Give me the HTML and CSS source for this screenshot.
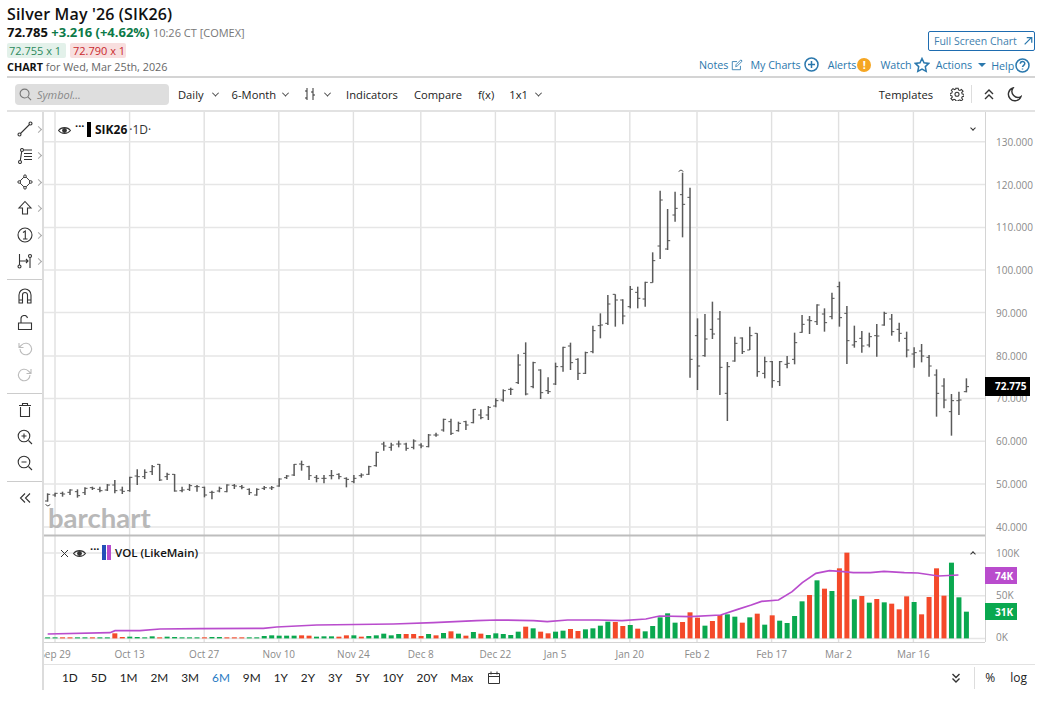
FILE: index.html
```html
<!DOCTYPE html>
<html lang="en">
<head>
<meta charset="utf-8">
<title>Silver May '26 (SIK26)</title>
<link rel="stylesheet" href="styles.css">
</head>
<body>
<div class="page">
  <header class="head">
    <div class="quote">
      <h1 class="title">Silver May '26 (SIK26)</h1>
      <div class="price"><b>72.785</b> <b class="up">+3.216 (+4.62%)</b> <span class="time">10:26 CT [COMEX]</span></div>
      <div class="bidask"><span class="bid">72.755 x 1</span><span class="ask">72.790 x 1</span></div>
      <div class="asof"><b>CHART</b> for Wed, Mar 25th, 2026</div>
    </div>
    <div class="links">
      <a class="full">Full Screen Chart
        <svg class="ic" width="10" height="10" viewBox="0 0 12 12"><path d="M2 10 10 2M4.500 2H10.500V8" class="blue thick"/></svg>
      </a>
      <nav class="actions">
        <a class="l1">Notes <svg width="12" height="12" viewBox="0 0 14 14"><path d="M11 8v4.500H1.500V3H7M5.500 9l.5-2.500L11.500 1 13 2.500 7.500 8z" class="blue"/></svg></a>
        <a class="l2">My Charts <svg width="15" height="15" viewBox="0 0 15 15"><circle cx="7.500" cy="7.500" r="6.500" class="blue thick"/><path d="M7.500 4v7M4 7.500h7" class="blue thick"/></svg></a>
        <a class="l3">Alerts<span class="alert">!</span></a>
        <a class="l4">Watch<svg width="16" height="16" viewBox="0 0 16 16"><path d="M8 1.500l2 4.300 4.700.6-3.400 3.200.9 4.700L8 12l-4.200 2.300.9-4.700L1.300 6.400 6 5.800z" class="blue thick"/></svg></a>
        <a class="l5">Actions <span class="caret"></span></a>
        <a class="l6">Help<svg width="15" height="15" viewBox="0 0 15 15"><circle cx="7.500" cy="7.500" r="6.500" class="blue thick"/><path d="M5.300 5.800c0-3 4.500-3 4.500-.2 0 1.700-2.300 1.700-2.300 3.500M7.500 10.400v1.200" class="blue thick"/></svg></a>
      </nav>
    </div>
  </header>

  <div class="toolbar">
    <label class="search">
      <svg width="13" height="13" viewBox="0 0 14 14"><circle cx="6" cy="6" r="4.800" class="grey"/><path d="M9.500 9.500 13 13" class="grey"/></svg>
      <span>Symbol...</span>
    </label>
    <span class="tool t-daily">Daily<i class="chev"></i></span>
    <span class="tool t-range">6-Month<i class="chev"></i></span>
    <span class="tool t-bars"><svg width="12" height="14" viewBox="0 0 12 14"><path d="M3 1v12M1 4h2M3 11H1M9 1v12M7 5h2M9 8h2" class="ink"/></svg><i class="chev"></i></span>
    <span class="tool t-ind">Indicators</span>
    <span class="tool t-cmp">Compare</span>
    <span class="tool t-fx">f(x)</span>
    <span class="tool t-one">1x1<i class="chev"></i></span>
    <span class="spring"></span>
    <span class="tool t-tpl">Templates</span>
    <svg class="t-gear" width="14" height="14" viewBox="0 0 24 24"><path d="M10 2h4l.6 3 2.400 1 2.600-1.700 2.800 2.800L20 9.700l1 2.300 3 .5v3.500l-3 .5-1 2.400 1.700 2.600-2.800 2.800L17 22l-2.400 1-.6 1h-4l-.6-2-2.400-1-2.600 1.700-2.800-2.800L4 17.300 3 15l-3-.5V11l3-.5L4 8 2.300 5.500l2.800-2.800L7.700 4.400 10 3.400z" class="ink wide"/><circle cx="12" cy="12.500" r="3.500" class="ink wide"/></svg>
    <span class="vsep"></span>
    <svg class="t-up" width="12" height="12" viewBox="0 0 12 12"><path d="M2 6l4-4 4 4M2 11l4-4 4 4" class="ink thick"/></svg>
    <svg class="t-moon" width="15" height="15" viewBox="0 0 15 15"><path d="M6 1a6.500 6.500 0 1 0 8 8.500A6 6 0 0 1 6 1z" class="ink thick"/></svg>
  </div>

  <div class="work">
    <aside class="side">
      <button class="sb more"><svg viewBox="0 0 16 16"><circle cx="2.500" cy="13.500" r="1.500"/><circle cx="13.500" cy="2.500" r="1.500"/><path d="M3.500 12.500l9-9"/></svg></button>
      <button class="sb more"><svg viewBox="0 0 16 16"><circle cx="3" cy="14" r="1.500"/><circle cx="5" cy="2" r="1.500"/><path d="M3.300 12.500 4.700 3.500M6.500 2H15M7 5.500h8M7 8.500h8M7 11.500h8"/></svg></button>
      <button class="sb more"><svg viewBox="0 0 18 18"><circle cx="9" cy="2.500" r="1.500"/><circle cx="9" cy="15.500" r="1.500"/><circle cx="2.500" cy="9" r="1.500"/><circle cx="15.500" cy="9" r="1.500"/><path d="M7.800 3.500 3.500 7.800M10.200 3.500l4.300 4.300M3.500 10.200l4.300 4.300M14.500 10.200l-4.300 4.300"/></svg></button>
      <button class="sb more"><svg viewBox="0 0 16 16"><path d="M8 1.500 14 8h-3.500v6h-5V8H2z"/></svg></button>
      <button class="sb more"><svg viewBox="0 0 16 16"><circle cx="8" cy="8" r="7"/><path d="M6 5.500 8.300 4v8M6 12h4.500"/></svg></button>
      <button class="sb more"><svg viewBox="0 0 16 16"><circle cx="2.500" cy="13.500" r="1.500"/><circle cx="13" cy="3" r="1.500"/><path d="M2.500 1v11M13 4.500V15M3 8h8M9 6l2 2-2 2"/></svg></button>
      <hr class="sbsep">
      <button class="sb"><svg viewBox="0 0 16 16"><path d="M2 15V7a6 6 0 0 1 12 0v8h-3.500V7a2.500 2.500 0 0 0-5 0v8zM2 12h3.500M10.500 12H14"/></svg></button>
      <button class="sb"><svg viewBox="0 0 16 16"><path d="M1.500 8h13v6.500h-13zM4 8V4a3.300 3.300 0 0 1 6.500-1"/></svg></button>
      <button class="sb off"><svg viewBox="0 0 16 16"><path d="M3 8a5.800 5.800 0 1 0 1.800-4.200L2 6.500M2 2v4.500h4.500"/></svg></button>
      <button class="sb off"><svg viewBox="0 0 16 16"><path d="M13 8a5.800 5.800 0 1 1-1.800-4.200L14 6.500M14 2v4.500H9.500"/></svg></button>
      <hr class="sbsep">
      <button class="sb"><svg viewBox="0 0 16 16"><path d="M3.500 5v9.500h9V5M2 3.500h12M5.500 3.500V1.500h5v2"/></svg></button>
      <button class="sb"><svg viewBox="0 0 16 16"><circle cx="7" cy="7" r="5.800"/><path d="M11.500 11.500 15 15M7 4.500v5M4.500 7h5"/></svg></button>
      <button class="sb"><svg viewBox="0 0 16 16"><circle cx="7" cy="7" r="5.800"/><path d="M11.500 11.500 15 15M4.500 7h5"/></svg></button>
      <hr class="sbsep">
      <button class="sb"><svg viewBox="0 0 16 16"><path d="M8 3.500 3.500 8 8 12.500M13 3.500 8.500 8l4.500 4.500"/></svg></button>
    </aside>

    <section class="chartcol">
      <div class="canvas">
        <svg id="chart" class="chart" width="991" height="553" viewBox="44 112 991 553" role="img" aria-label="Silver May 2026 price and volume chart"></svg>
        <div class="legend lg-main">
          <svg class="eye" width="13" height="9" viewBox="0 0 12 8"><path d="M.5 4C3 .5 9 .5 11.500 4 9 7.500 3 7.500.5 4z" class="ink"/><circle cx="6" cy="4" r="2.200" class="dot"/></svg>
          <span class="dots">···</span><i class="swatch black"></i><b>SIK26</b><span class="lg-tf">·1D·</span>
        </div>
        <div class="legend lg-vol">
          <svg width="9" height="9" viewBox="0 0 9 9"><path d="M1 1l7 7M8 1 1 8" class="ink"/></svg>
          <svg class="eye" width="13" height="9" viewBox="0 0 12 8"><path d="M.5 4C3 .5 9 .5 11.500 4 9 7.500 3 7.500.5 4z" class="ink"/><circle cx="6" cy="4" r="2.200" class="dot"/></svg>
          <span class="dots">···</span><i class="swatch blue-s"></i><i class="swatch purple-s"></i><b>VOL (LikeMain)</b>
        </div>
        <span class="fold fold-main"></span>
        <span class="fold fold-vol"></span>
      </div>
      <div class="ranges">
        <span>1D</span><span>5D</span><span>1M</span><span>2M</span><span>3M</span><span class="on">6M</span><span>9M</span><span>1Y</span><span>2Y</span><span>3Y</span><span>5Y</span><span>10Y</span><span>20Y</span><span>Max</span>
        <svg class="cal" width="12" height="13" viewBox="0 0 12 13"><path d="M.5 2.500h11v10H.500zM.5 5.500h11M3 .5v3M9 .5v3" class="ink"/></svg>
        <span class="spring"></span>
        <svg class="dn" width="10" height="10" viewBox="0 0 10 10"><path d="M1.500 1 5 4.500 8.500 1M1.500 5.500 5 9l3.500-3.500" class="ink thick"/></svg>
        <span class="vsep2"></span>
        <span class="pct">%</span><span class="log">log</span>
      </div>
    </section>
  </div>
</div>
<script src="chart.js"></script>
</body>
</html>
```
FILE: styles.css
```css
* { box-sizing: border-box; }
html, body { margin: 0; padding: 0; background: #fff; }
body { font-family: "Open Sans", "Noto Sans", sans-serif; color: #222; overflow: hidden; }
.page { width: 1035px; height: 711px; padding-left: 7px; }
svg { display: block; fill: none; }
a { color: #2b78ad; }

.blue { stroke: #2b78ad; stroke-width: 1; fill: none; }
.blue.thick { stroke-width: 1.500; }
.ink { stroke: #333; stroke-width: 1; fill: none; }
.ink.thick { stroke-width: 1.400; }
.ink.wide { stroke-width: 1.800; }
.grey { stroke: #777; stroke-width: 1.200; fill: none; }

.head { height: 78px; border-bottom: 2px solid #d4d4d4; display: flex; justify-content: space-between; }
.quote { padding-top: 4px; }
.title { margin: 0; font-size: 16px; line-height: 20px; font-weight: 600; color: #111; letter-spacing: .15px; }
.price { font-size: 13px; line-height: 17px; white-space: nowrap; color: #111; }
.price b { font-weight: 700; }
.price .up { color: #0c7a48; }
.price .time { font-size: 11px; color: #777; }
.bidask { display: flex; gap: 4px; margin-top: 2px; font-size: 11px; line-height: 15px; white-space: nowrap; }
.bid { background: #e3f1ea; color: #2b8a5c; padding-left: 2px; border-radius: 2px; width: 59px; }
.ask { background: #f8dfdf; color: #c9282d; padding-left: 3px; border-radius: 2px; width: 56px; }
.asof { font-size: 10.800px; line-height: 16px; margin-top: 1px; color: #666; white-space: nowrap; }
.asof b { color: #111; font-weight: 700; }

.links { display: flex; flex-direction: column; align-items: flex-end; padding-top: 31px; }
.full { display: flex; align-items: center; gap: 6px; width: 107px; height: 21px; border: 1px solid #1e6cb0; border-radius: 2px; padding-left: 5px; font-size: 10.500px; color: #3f7fae; white-space: nowrap; }
.actions { display: flex; align-items: center; height: 24px; font-size: 10.700px; margin-top: 2px; width: 336px; white-space: nowrap; }
.actions a { display: flex; align-items: center; gap: 3px; }
.l2 { margin-left: 7px; }
.l3 { margin-left: 9px; padding-top: 1px; }
.actions .l3 { gap: 1px; }
.l4 { margin-left: 9px; padding-top: 1px; }
.actions .l4 { gap: 2px; }
.l5 { margin-left: 6px; padding-top: 1px; }
.l6 { margin-left: 5px; padding-top: 2px; }
.actions .l6 { gap: 1px; }
.alert { display: block; width: 14px; height: 14px; border-radius: 50%; background: #f5a623; color: #fff; font-weight: 700; font-size: 11px; line-height: 14px; text-align: center; }
.caret { width: 0; height: 0; border: 4px solid transparent; border-top: 4px solid #2b78ad; border-bottom: 0; margin-left: 3px; }

.toolbar { height: 34px; border-bottom: 2px solid #e2e2e2; display: flex; align-items: center; font-size: 11.200px; color: #222; padding-left: 8px; }
.search { width: 154px; height: 21px; border-radius: 4px; background: #dedede; display: flex; align-items: center; gap: 5px; padding-left: 4px; color: #888; font-style: italic; font-size: 11px; }
.tool { display: flex; align-items: center; white-space: nowrap; }
.chev { display: block; width: 5px; height: 5px; border-right: 1px solid #444; border-bottom: 1px solid #444; transform: rotate(45deg) translate(-1px, -1px); }
.t-daily { margin-left: 9px; gap: 9px; }
.t-range { margin-left: 14px; gap: 7px; }
.t-bars { margin-left: 16px; gap: 9px; }
.t-ind { margin-left: 16px; }
.t-cmp { margin-left: 16px; }
.t-fx { margin-left: 16px; }
.t-one { margin-left: 15px; gap: 8px; }
.spring { flex: 1; }
.t-tpl { margin-right: 17px; }
.vsep { width: 1px; height: 18px; background: #ddd; margin: 0 11px 0 7px; }
.t-up { margin-right: 12px; }
.t-moon { margin-right: 13px; }

.work { display: flex; height: 579px; }
.side { width: 37px; height: 578px; border-right: 2px solid #dcdcdc; display: flex; flex-direction: column; padding-top: 4px; }
.sb { display: flex; align-items: center; justify-content: center; width: 35px; height: 26.400px; flex: none; margin: 0; padding: 0 0 0 1px; border: 0; background: none; position: relative; }
.sb svg { width: 16px; height: 16px; stroke: #333; stroke-width: 1.100; fill: none; }
.sb.off svg { stroke: #bbb; }
.sb.more::after { content: ""; position: absolute; left: 29px; top: 11px; width: 4px; height: 4px; border-right: 1px solid #aaa; border-top: 1px solid #aaa; transform: rotate(45deg); }
.sbsep { flex: none; height: 1px; width: 100%; margin: 4.700px 0 3px; border: 0; background: #ccc; }

.chartcol { flex: 1; min-width: 0; display: flex; flex-direction: column; }
.canvas { position: relative; width: 991px; height: 553px; border-bottom: 1px solid #e2e2e2; }
.chart { overflow: hidden; }

.g-h { stroke: #e6e6e6; stroke-width: 1.500; }
.g-v { stroke: #e0e0e0; stroke-width: 1.400; }
.frame { stroke: #d4d4d4; stroke-width: 1; }
.pane { stroke: #bdbdbd; stroke-width: 2; }
.bar { stroke: #5a5a5a; stroke-width: 1.500; fill: none; }
.tick { stroke: #555; stroke-width: 1; fill: none; }
.vg { fill: #0aa84f; }
.vr { fill: #f4492a; }
.ma { stroke: #b94ccd; stroke-width: 1.700; fill: none; }
.ax { font: 10px "Open Sans", sans-serif; fill: #8a8a8a; }
.tag-k { fill: #000; }
.tag-p { fill: #b94ccd; }
.tag-g { fill: #0aa84f; }
.tag-t { font: 700 10px "Open Sans", sans-serif; fill: #fff; }
.wm { font: 700 27.500px Lato, sans-serif; fill: #b8b8b8; }

.legend { position: absolute; display: flex; align-items: center; font-size: 11.500px; color: #111; white-space: nowrap; }
.legend b { font-weight: 600; }
.lg-main { left: 14px; top: 9px; height: 16px; }
.lg-main b { font-size: 12px; font-weight: 700; }
.lg-main .black { margin-right: 4px; }
.lg-vol { left: 16px; top: 432px; height: 16px; }
.lg-vol svg:first-child { margin-right: 4px; margin-top: 3px; }
.lg-vol .purple-s { margin-right: 4px; }
.eye { margin-top: 2px; }
.dot { fill: #333; }
.dots { font-size: 11px; font-weight: 700; line-height: 8px; margin: -6px 3px 0 4px; width: 9px; }
.swatch { display: block; width: 4px; height: 15px; margin-right: 1px; }
.black { background: #000; }
.blue-s { background: #2450b8; }
.purple-s { background: #b94ccd; }
.lg-tf { font-weight: 400; font-size: 12px; color: #333; margin-left: 2px; }
.fold { position: absolute; width: 4px; height: 4px; border-right: 1px solid #333; border-bottom: 1px solid #333; }
.fold-main { left: 927px; top: 14px; transform: rotate(45deg); }
.fold-vol { left: 927px; top: 440px; transform: rotate(225deg); }

.ranges { display: flex; align-items: center; height: 25px; padding-left: 18px; gap: 13px; font-family: Lato, "Open Sans", sans-serif; font-size: 11.800px; color: #222; }
.ranges .on { color: #1f7ac4; }
.cal { margin-left: 2px; }
.vsep2 { width: 1px; height: 22px; background: #ddd; margin-right: -3px; }
.pct { margin-right: 2px; font-family: "Open Sans", sans-serif; font-size: 12px; }
.log { margin-right: 8px; font-family: "Open Sans", sans-serif; font-size: 12px; }
```
FILE: chart.js
```js
(function () {
  var svg = document.getElementById('chart');
  var NS = 'http://www.w3.org/2000/svg';
  function el(name, attrs, text) {
    var n = document.createElementNS(NS, name);
    for (var k in attrs) n.setAttribute(k, attrs[k]);
    if (text) n.textContent = text;
    svg.appendChild(n);
    return n;
  }
  function X(i) { return 47.6 + 7.47 * i; }

  // grid
  var gridX = [55, 129.6, 204.2, 278.8, 353.4, 420.8, 495.4, 555.2, 629.8, 697, 771.6, 838.6, 913.4];
  gridX.forEach(function (x) { el('line', { x1: x, x2: x, y1: 112, y2: 642, 'class': 'g-v' }); });
  var prices = ['130.000','120.000','110.000','100.000','90.000','80.000','70.000','60.000','50.000','40.000'];
  var priceY = [141.8,184.6,227.4,270,312.6,356,398.4,441.2,484,527];
  priceY.forEach(function (y) { el('line', { x1: 44, x2: 985, y1: y, y2: y, 'class': 'g-h' }); });
  [553, 595.8, 638.4].forEach(function (y) { el('line', { x1: 44, x2: 985, y1: y, y2: y, 'class': 'g-h' }); });

  // frame
  el('line', { x1: 985.5, x2: 985.5, y1: 112, y2: 642, 'class': 'frame' });
  el('line', { x1: 44, x2: 985, y1: 642.5, y2: 642.5, 'class': 'frame' });
  el('line', { x1: 44, x2: 985, y1: 535.5, y2: 535.5, 'class': 'pane' });

  // OHLC: [high, low, open, close] read in 3x-scaled pixels from a base row
  var sets = [
    [0, 440, [[160,185,183,163],[158,170,165,160],[155,170,160,162],[148,165,157,150],[148,173,155,167],[142,165,158,145],[140,150,143,145],[140,157,148,152],[132,153,150,135],[120,160,135,152],[140,162,150,154],[110,155,152,112],[88,135,108,110],[88,117,110,97],[75,105,95,80],[72,123,73,120],[98,120,110,103],[102,155,103,153],[140,157,152,150],[132,153,148,137],[135,155,140,140],[140,172,142,165],[152,178,157,157],[140,157,153,145],[133,157,155,135],[132,147,136,138],[135,148,140,142],[145,165,148,158],[145,167,165,148],[138,150,145,143],[138,150,144,143],[115,140,138,117],[105,117,113,108],[72,108,105,73],[62,92,72,74],[77,120,80,107],[105,127,112,115],[105,130,115,115],[90,118,107,107],[100,118,103,110],[112,142,115,118],[105,130,125,115],[100,113,107,105],[77,105,103,80],[35,80,77,37]]],
    [45, 320, [[365,392,372,378],[368,392,382,375],[362,382,372,372],[368,392,372,385],[358,388,382,363],[370,385,375,378],[342,382,380,345],[338,350,345,345],[296,335,330,298],[296,345,305,340],[305,335,332,310],[302,330,305,315],[267,310,308,268],[268,298,285,293],[258,300,285,262],[235,262,258,242],[208,245,240,212],[203,225,208,208],[103,192,188,135],[67,226,100,222],[125,205,200,128],[148,237,150,218],[172,222,212,215],[128,195,192,140],[80,155,140,82],[68,150,78,128],[115,180,118,160],[95,162,160,98],[17,100,95,32]]],
    [74, 160, [[460,535,497,495],[405,495,490,432],[403,500,403,420],[418,493,420,468],[378,445,440,388],[380,445,397,415],[365,440,417,367],[277,368,368,302],[92,297,258,120],[147,270,267,242],[95,185,165,145],[38,232,104,133],[83,653,112,598],[475,690,527,618],[462,590,587,537],[425,537,508,522],[453,705,477,622],[606,783,700,620],[530,605,603,550],[532,582,534,575],[500,570,570,527],[520,650,520,635],[590,655,640,605],[603,683,605,662],[603,678,665,605]]],
    [99, 270, [[258,295,283,280],[188,283,268,218],[135,188,187,163],[138,192,150,152],[103,165,155,105],[115,185,132,158],[68,148,140,85],[35,170,50,143],[108,282,130,212],[167,233,225,215],[183,248,205,228],[188,232,225,200],[162,260,197,198],[125,167,165,130],[132,197,147,185],[158,215,178,190],[185,262,205,240],[232,293,252,248],[222,277,243,258],[255,320,262,288],[298,440,315,370],[325,415,348,390],[372,497,425,392],[365,435,392,390],[325,367,365,350]]]
  ];
  sets.forEach(function (s) {
    s[2].forEach(function (b, n) {
      var x = X(s[0] + n), y = function (v) { return s[1] + v / 3; };
      el('line', { x1: x, x2: x, y1: y(b[0]), y2: y(b[1]), 'class': 'bar' });
      el('path', { d: 'M' + (x - 2.6) + ' ' + y(b[2]) + 'H' + x + 'M' + x + ' ' + y(b[3]) + 'H' + (x + 2.6), 'class': 'tick' });
    });
  });
  el('path', { d: 'M678.6 171.5q2.400-3 4.800 0', 'class': 'tick' });
  el('path', { d: 'M45.500 504.500q2.400 3 4.800 0', 'class': 'tick' });

  // volume: top of each bar in the same 3x pixels; positive = up day, negative = down day
  var vol = [322,322,-322,-322,322,322,-322,322,322,-310,-321,320,321,322,319,-322,320,321,322,322,322,-322,321,321,-322,-322,-322,322,322,318,316,317,317,317,-316,-317,320,319,319,-320,-316,316,-320,318,316,311,316,312,-312,-312,-318,312,-316,309,-304,311,-317,306,-311,315,310,312,315,305,
    -290,295,-305,-310,305,302,-297,-303,298,295,287,275,-276,-288,285,-296,304,288,262,250,278,-276,-247,-263,287,-273,-255,253,260,-278,262,-251,284,-256,272,279,258,214,-195,151,-176,183,-115,-68,208,-198,218,-207,217,-221,-238,-199,216,-253,-201,-115,-197,98,202,245];
  vol.forEach(function (v, i) {
    var top = 530 + Math.abs(v) / 3, base = 638.4;
    el('rect', { x: X(i) - 2.5, y: top, width: 5, height: base - top, 'class': v > 0 ? 'vg' : 'vr' });
  });

  // volume moving average
  var maA = [[143,312],[330,308],[345,302],[420,302],[480,297],[600,296],[790,295],[830,291],[950,285],[1180,282],[1300,278],[1430,272],[1490,270],[1560,271]];
  var maB = [[40,272],[80,275],[140,270],[230,270],[300,272],[370,267],[410,258],[500,260],[590,255],[640,238],[680,225],[710,214],[760,210],[800,185],[830,158],[870,130],[910,122],[950,125],[980,128],[1030,128],[1070,124],[1130,128],[1170,129],[1230,138],[1289,135]];
  var pts = maA.map(function (p) { return (p[0] / 3) + ',' + (530 + p[1] / 3); })
    .concat(maB.map(function (p) { return (520 + p[0] / 2.94) + ',' + (530 + p[1] / 3); }));
  el('polyline', { points: pts.join(' '), 'class': 'ma' });

  // axes
  prices.forEach(function (t, i) { el('text', { x: 996, y: priceY[i] + 4, 'class': 'ax' }, t); });
  [['100K', 553], ['50K', 595.8], ['0K', 637.5]].forEach(function (p) { el('text', { x: 996, y: p[1] + 3.5, 'class': 'ax' }, p[0]); });
  var labels = ['Sep 29','Oct 13','Oct 27','Nov 10','Nov 24','Dec 8','Dec 22','Jan 5','Jan 20','Feb 2','Feb 17','Mar 2','Mar 16'];
  labels.forEach(function (t, i) { el('text', { x: gridX[i], y: 658, 'text-anchor': 'middle', 'class': 'ax' }, t); });

  // last-value tags
  el('rect', { x: 985, y: 377, width: 45, height: 19, 'class': 'tag-k' });
  el('text', { x: 995, y: 390, 'class': 'tag-t' }, '72.775');
  el('rect', { x: 985, y: 567, width: 32, height: 17, 'class': 'tag-p' });
  el('text', { x: 995, y: 579.5, 'class': 'tag-t' }, '74K');
  el('rect', { x: 985, y: 603, width: 32, height: 17, 'class': 'tag-g' });
  el('text', { x: 995, y: 615.5, 'class': 'tag-t' }, '31K');

  // watermark
  el('text', { x: 48, y: 528, 'class': 'wm' }, 'barchart');
})();
```
